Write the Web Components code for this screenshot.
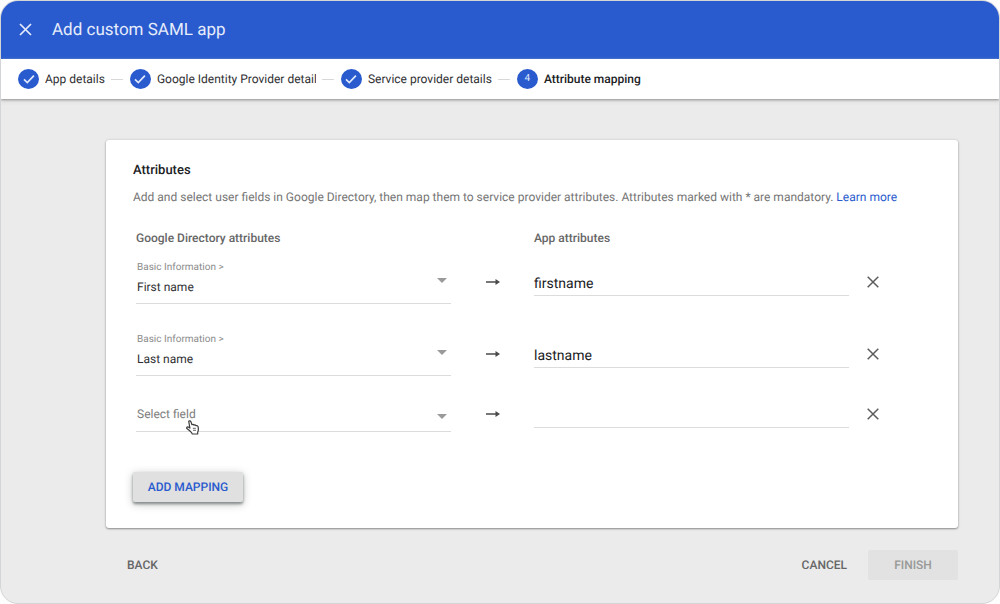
<!DOCTYPE html>
<html lang="en">
<head>
<meta charset="utf-8">
<title>Add custom SAML app</title>
<style>
  body { margin: 0; background: #fdfdfd; font-family: Roboto, "Liberation Sans", sans-serif; font-size: 12px; color: #2f3033; text-rendering: geometricPrecision; }
</style>
</head>
<body>
<saml-wizard heading="Add custom SAML app">
  <wizard-step slot="steps" done>App details</wizard-step>
  <wizard-step slot="steps" done clipped>Google Identity Provider details</wizard-step>
  <wizard-step slot="steps" done>Service provider details</wizard-step>
  <wizard-step slot="steps" number="4">Attribute mapping</wizard-step>

  <attribute-card>
    <mapping-row group="Basic Information &gt;" field="First name" value="firstname"></mapping-row>
    <mapping-row group="Basic Information &gt;" field="Last name" value="lastname"></mapping-row>
    <mapping-row><hand-pointer></hand-pointer></mapping-row>
  </attribute-card>

  <text-button slot="back">BACK</text-button>
  <text-button slot="actions">CANCEL</text-button>
  <text-button slot="actions" kind="filled" disabled>FINISH</text-button>
</saml-wizard>

<script>
class BaseElement extends HTMLElement {
  connectedCallback() {
    if (this.shadowRoot) return;
    this.attachShadow({ mode: 'open' }).innerHTML = this.render();
  }
  attr(name) { return this.getAttribute(name) || ''; }
}

class SamlWizard extends BaseElement {
  render() {
    return `<style>
      :host { display: flex; flex-direction: column; box-sizing: border-box; min-height: 100vh; overflow: hidden;
        border: 1px solid #d3d5d6; border-radius: 18px; background: #ebebeb; }
      header { display: flex; align-items: center; gap: 20px; height: 57px; padding: 0 17px 1px; background: #295bce; color: #e6ecfa; }
      h1 { margin: 0; font-size: 17px; line-height: 24px; font-weight: 400; }
      button { display: flex; padding: 0; border: 0; background: none; color: inherit; }
      nav { display: flex; align-items: center; gap: 7px; height: 40px; padding: 0 17px; background: #fff;
        box-shadow: 0 1px 2px #9a9a9a, 0 2px 4px #cfcfcf; }
      main { padding: 41px 41px 0 105px; }
      footer { display: flex; align-items: center; gap: 21px; padding: 22px 41px 22px 126px; }
      .space { flex: 1; }
    </style>
    <header>
      <button aria-label="Close"><svg width="14" height="14" viewBox="0 0 14 14"><path d="M2 1l11 11M13 1L2 12" stroke="currentColor" stroke-width="1.7" fill="none"/></svg></button>
      <h1>${this.attr('heading')}</h1>
    </header>
    <nav aria-label="Steps"><slot name="steps"></slot></nav>
    <main><slot></slot></main>
    <footer><slot name="back"></slot><span class="space"></span><slot name="actions"></slot></footer>`;
  }
}

class WizardStep extends BaseElement {
  render() {
    const done = this.hasAttribute('done');
    const mark = done
      ? '<svg width="20" height="20" viewBox="0 0 20 20"><path d="M5 10.3l3.3 3.2 6.6-6.9" fill="none" stroke="#dfe8fb" stroke-width="1.7"/></svg>'
      : this.attr('number');
    return `<style>
      :host { display: flex; align-items: center; gap: 6px; line-height: 16px; white-space: nowrap; }
      :host(:not([done])) { font-weight: 500; color: #202124; }
      :host([clipped]) .text { max-width: 159px; overflow: hidden; }
      .mark { display: flex; align-items: center; justify-content: center; width: 21px; height: 20px; border-radius: 50%;
        background: #295bce; color: #dfe8fb; font-size: 10px; font-weight: 400; }
      .line { width: 12px; height: 1px; background: #d8d8d8; }
    </style>
    <span class="mark">${mark}</span><span class="text"><slot></slot></span>${done ? '<span class="line"></span>' : ''}`;
  }
}

class AttributeCard extends BaseElement {
  render() {
    return `<style>
      :host { display: block; padding: 21px 27px 26px; background: #fff; border-radius: 3px;
        box-shadow: 0 1px 2px #8c8c8c, 0 0 3px #cfcfcf; }
      h2 { margin: 0 0 7px; font-size: 13px; line-height: 20px; font-weight: 500; color: #202124; }
      p { margin: 0 0 24px; line-height: 18px; color: #757575; }
      a { color: #295bce; text-decoration: none; }
      .grid { padding: 0 34px 0 3px; }
      .heads { display: grid; grid-template-columns: 1fr 83px 1fr 48px; margin-bottom: 10px; }
      h3 { margin: 0; font-size: 12px; line-height: 16px; font-weight: 500; color: #666; }
      h3 + h3 { grid-column: 3; }
      .rows { display: grid; gap: 24px; margin-bottom: 40px; }
    </style>
    <h2>Attributes</h2>
    <p>Add and select user fields in Google Directory, then map them to service provider attributes. Attributes marked with * are mandatory. <a href="#learn">Learn more</a></p>
    <div class="grid">
      <div class="heads"><h3>Google Directory attributes</h3><h3>App attributes</h3></div>
      <div class="rows"><slot></slot></div>
    </div>
    <text-button kind="raised">ADD MAPPING</text-button>`;
  }
}

class MappingRow extends BaseElement {
  render() {
    const group = this.attr('group');
    return `<style>
      :host { display: grid; grid-template-columns: 1fr 83px 1fr 48px; align-items: start; }
      .field { position: relative; display: grid; }
      .field > * { grid-area: 1 / 1; }
      label { margin: 5px 0 0 1px; font-size: 10px; line-height: 14px; color: #8b8b8b; pointer-events: none; z-index: 1; }
      select { appearance: none; box-sizing: border-box; width: 100%; height: 48px; margin: 0; padding: 15px 24px 0 1px; border: 0;
        border-bottom: 1px solid #dcdcdc; border-radius: 0; background: none; font: inherit; text-rendering: inherit; color: #2f3033; }
      select.empty { height: 32px; padding: 0 24px 3px 1px; color: #7d7d7d; }
      .caret { place-self: center end; margin-right: 4px; pointer-events: none; }
      .cell { display: flex; align-items: center; justify-content: center; height: 28px; margin-top: ${group ? 12 : 0}px; }
      input { box-sizing: border-box; width: 100%; height: 28px; padding: 4px 0 0; border: 0; border-bottom: 1px solid #dcdcdc;
        background: none; font: inherit; font-size: 14px; text-rendering: inherit; color: #202124; outline: 0; }
      button { display: flex; padding: 0; border: 0; background: none; color: #5c5c5c; }
    </style>
    <div class="field">
      ${group ? `<label for="field">${group}</label>` : ''}
      <select id="field" ${group ? '' : 'class="empty" aria-label="Directory field"'}><option>${this.attr('field') || 'Select field'}</option></select>
      <svg class="caret" width="10" height="5" viewBox="0 0 10 5"><path d="M0 0h10L5 5z" fill="#9a9a9a"/></svg>
      <slot></slot>
    </div>
    <span class="cell"><svg width="14" height="8" viewBox="0 0 14 8"><path d="M0 4h11" stroke="#4a4a4a" stroke-width="1.5"/><path d="M9.5 1L14 4 9.5 7z" fill="#4a4a4a"/></svg></span>
    <span class="cell"><input type="text" aria-label="App attribute" value="${this.attr('value')}"></span>
    <span class="cell"><button aria-label="Remove mapping"><svg width="12" height="12" viewBox="0 0 12 12"><path d="M.7.7l10.6 10.6M11.3.7L.7 11.3" stroke="currentColor" stroke-width="1.5" fill="none"/></svg></button></span>`;
  }
}

class HandPointer extends BaseElement {
  render() {
    return `<style>:host { position: absolute; left: 50px; top: 20px; display: flex; pointer-events: none; }</style>
    <svg width="13" height="15" viewBox="0 0 13 15"><path d="M2.7 1.2C3.5.3 4.6 1 5 2l1 2.7c1-.5 1.7-.3 2.1.4.8-.4 1.5-.1 1.9.6 1-.3 1.9.2 2.1 1.3.4 1.7.5 3.6-.4 5.1v1.8L6.3 14l-.7-1.3C4.4 11.5 3 10.2 1.2 8.8.1 7.8 1 6.6 2.2 7.1l1.7 1z" fill="#fff" stroke="#3d3d3d" stroke-width="1.2" stroke-linejoin="round"/><path d="M6.8 8.3h3M7 10.3h3" stroke="#666"/></svg>`;
  }
}

class TextButton extends BaseElement {
  render() {
    return `<style>
      :host { display: block; width: max-content; }
      button { display: block; height: 30px; padding: 0; border: 0; border-radius: 2px; background: none;
        font: inherit; text-rendering: inherit; font-weight: 500; line-height: 30px; color: #666; }
      :host([kind="filled"]) button { width: 90px; background: #e2e2e2; color: #999; }
      :host([kind="raised"]) button { width: 110px; background: #e0e0e0; color: #295bce;
        box-shadow: 0 2px 3px #858b8b, 0 2px 10px #c4c4c4; }
    </style>
    <button ${this.hasAttribute('disabled') ? 'disabled' : ''}><slot></slot></button>`;
  }
}

customElements.define('text-button', TextButton);
customElements.define('hand-pointer', HandPointer);
customElements.define('mapping-row', MappingRow);
customElements.define('attribute-card', AttributeCard);
customElements.define('wizard-step', WizardStep);
customElements.define('saml-wizard', SamlWizard);
</script>
</body>
</html>
